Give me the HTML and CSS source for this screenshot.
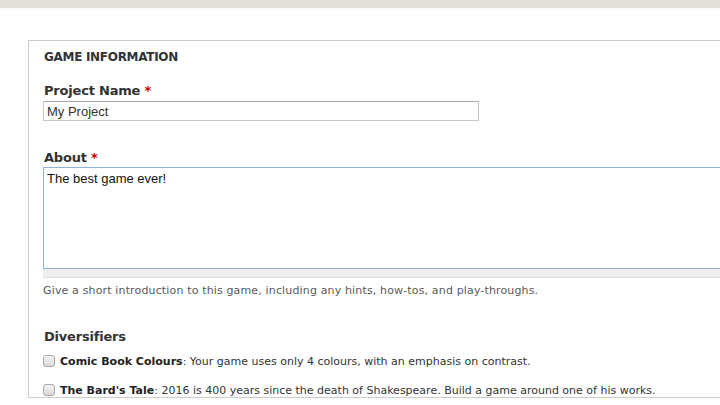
FILE: index.html
```html
<!DOCTYPE html>
<html lang="en">
<head>
    <meta charset="UTF-8">
    <title>Game Information</title>
    <link rel="stylesheet" href="styles.css">
</head>
<body>
    <div class="topbar"></div>
    <div class="page">
        <div class="group">
            <h2 class="group-title">GAME INFORMATION</h2>

            <div class="field">
                <label class="field-label" for="name">Project Name <span class="req">*</span></label>
                <input class="text-input" id="name" type="text" value="My Project">
            </div>

            <div class="field field-about">
                <label class="field-label" for="about">About <span class="req">*</span></label>
                <div class="textarea-wrap">
                    <textarea class="text-area" id="about">The best game ever!</textarea>
                    <div class="grippie"></div>
                </div>
                <p class="field-desc">Give a short introduction to this game, including any hints, how-tos, and play-throughs.</p>
            </div>

            <div class="field field-div">
                <div class="field-label">Diversifiers</div>
                <label class="check-row"><input type="checkbox" class="check"><span><b>Comic Book Colours</b>: Your game uses only 4 colours, with an emphasis on contrast.</span></label>
                <label class="check-row"><input type="checkbox" class="check"><span><b>The Bard's Tale</b>: 2016 is 400 years since the death of Shakespeare. Build a game around one of his works.</span></label>
            </div>
        </div>
    </div>
</body>
</html>
```

FILE: styles.css
```css
body {
    margin: 0;
    background: #fff;
    font-family: "DejaVu Sans", "Open Sans", sans-serif;
    color: #333;
    overflow: hidden;
}
.topbar {
    height: 8px;
    background: #e2e0d9;
    box-shadow: 0 1px 3px rgba(0, 0, 0, 0.04);
}
.page {
    padding: 32px 0 0 28px;
}
.group {
    border: 1px solid #cccccc;
    border-right: none;
    padding: 0 0 0 14px;
}
.group-title {
    font-size: 12px;
    font-weight: bold;
    color: #333;
    margin: 8px 0 0 1px;
    line-height: 16px;
    letter-spacing: -0.3px;
}
.field {
    margin-top: 17px;
}
.field-label {
    display: block;
    font-size: 13px;
    font-weight: bold;
    color: #333;
    line-height: 18px;
    margin-left: 1px;
    letter-spacing: -0.2px;
}
.req {
    color: #cc0000;
}
.text-input {
    display: block;
    box-sizing: border-box;
    width: 436px;
    height: 20px;
    margin: 1px 0 0 0;
    padding: 0 3px;
    border: 1px solid #c8c8c8;
    border-top-color: #a8a8a8;
    font-family: "Liberation Sans", Arial, sans-serif;
    font-size: 13px;
    color: #333;
}
.field-about {
    margin-top: 28px;
}
.textarea-wrap {
    margin-top: 0;
}
.text-area {
    display: block;
    box-sizing: border-box;
    width: 100%;
    height: 102px;
    margin: 0;
    padding: 3px 3px;
    border: 1px solid #8db4d8;
    border-right: none;
    resize: none;
    font-family: "Liberation Sans", Arial, sans-serif;
    font-size: 13px;
    color: #111;
    outline: none;
}
.grippie {
    height: 8px;
    background: #eeeeee;
    border-bottom: 1px solid #dddddd;
}
.field-desc {
    margin: 6px 0 0 0;
    font-size: 11px;
    color: #5a5a5a;
    line-height: 14px;
    letter-spacing: 0.15px;
}
.field-div {
    margin-top: 30px;
}
.check-row {
    display: flex;
    align-items: center;
    font-size: 11px;
    color: #333;
    height: 14px;
    margin-top: 8px;
}
.check-row + .check-row {
    margin-top: 15px;
}
.check-row b {
    color: #222;
}
.check {
    appearance: none;
    -webkit-appearance: none;
    box-sizing: border-box;
    width: 12px;
    height: 12px;
    margin: 0 5px 0 0;
    border: 1px solid #a9a9a9;
    border-radius: 3px;
    background: linear-gradient(#f4f4f4, #d9d9d9);
}
```
